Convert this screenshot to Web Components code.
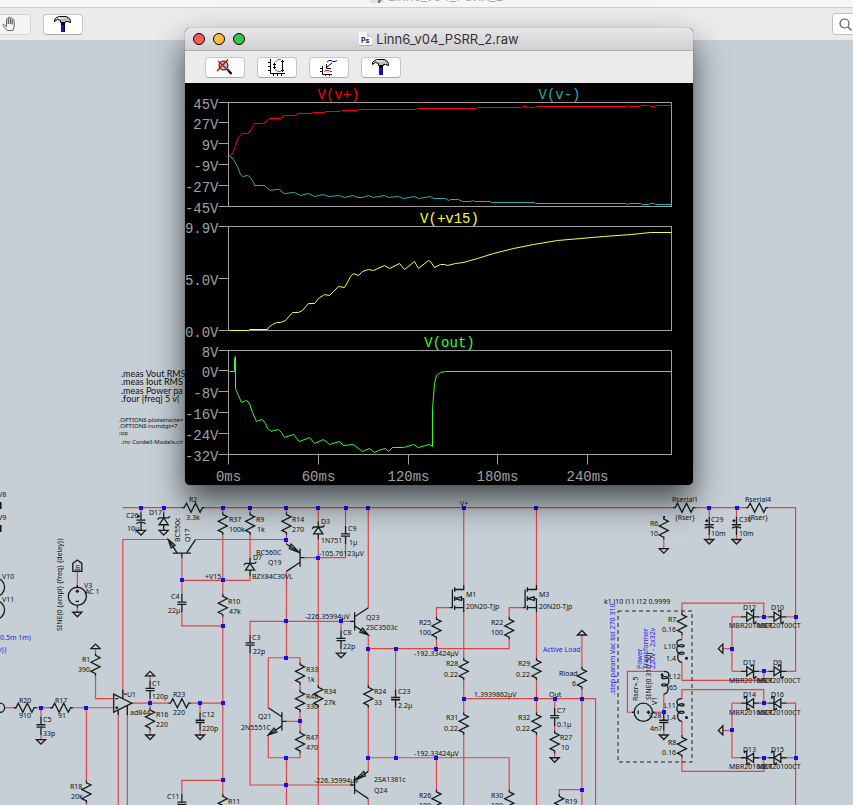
<!DOCTYPE html>
<html lang="en">
<head>
<meta charset="utf-8">
<title>Linn6_v04_PSRR_2</title>
<style>
  html, body { height: 100%; margin: 0; }
  body { font-family: Inter, "Liberation Sans", sans-serif; font-size: 13px; overflow: hidden; }
</style>
</head>
<body>
<sim-desktop></sim-desktop>

<script>
/* ICONS */
const HAMMER = `
  <path d="M0.5 5.5V3.5L2.5 1.5L5.5 0.5H12.5L15.5 2.5L16.5 4.5V6.5L13.5 5.5H11.5V6.5H6.5V4.5L3.5 3.5Z" fill="#b8bcbc" stroke="#000"/>
  <path d="M4 2H11" stroke="#fff"/>
  <path d="M7 7H11V10H7Z" fill="#000"/>
  <path d="M7 9H11V16H7Z" fill="#1010d8"/>
  <path d="M10.5 8V16" stroke="#000070"/>`;

const ICONS = {
  hammer: HAMMER,
  hand: `
    <path d="M5 14.5L1 9.5C0.5 8.3 1.8 7.8 2.6 8.7L4.5 10.8V3.5C4.5 2.2 6.2 2.2 6.3 3.5V8V2C6.4 0.7 8.2 0.7 8.3 2V8V2.5C8.4 1.3 10.2 1.3 10.2 2.6V8.3V4.5C10.4 3.2 12.2 3.4 12.2 4.7V11L10.8 14.5Z" fill="#f6f6f6" stroke="#666"/>`,
  zoomoff: `
    <circle cx="7.5" cy="6.5" r="4.5" fill="#70e4e8" stroke="#000"/>
    <path d="M11 10L15.5 15" stroke="#000" stroke-width="2.4"/>
    <path d="M2 2L13 12M12 0.5L1 12" stroke="#f00" stroke-width="1.6"/>`,
  autorange: `
    <path d="M2.5 0V14.5H17M0 3.5H2M0 7.5H2M0 11.5H2M5.5 15V17M9.5 15V17M13.5 15V17" fill="none" stroke="#000"/>
    <path d="M14.5 1V13M6.5 4V10" stroke="#000"/>
    <path d="M13 2.5H16M13 11.5H16M5 5.5H8M5 8.5H8" stroke="#000"/>
    <path d="M13 0.5H10L7 3.5M7 10.5L10 12.5H13" fill="none" stroke="#f03010"/>`,
  pick: `
    <path d="M2.5 7V15.5H12M0 9.5H2M0 12.5H2M5.5 15V17M9.5 15V17" fill="none" stroke="#000"/>
    <path d="M4 12.5L6 11.5H9L10 12.5H12" fill="none" stroke="#f00"/>
    <path d="M7 3L9 1.5H11L13 2.5H15L17 1.5" fill="none" stroke="#00f"/>
    <path d="M12 4L6.5 8.5M6.5 5V9.5H11" fill="none" stroke="#000"/>`
};

/* TOOLBAR BUTTON */
class ToolButton extends HTMLElement {
  constructor() {
    super();
    this.attachShadow({mode: 'open'});
  }
  connectedCallback() {
    const off = this.hasAttribute('disabled');
    this.shadowRoot.innerHTML = `
      <style>
        :host { display: block; flex: none; }
        button { display: flex; align-items: center; justify-content: center; width: 40px; height: 21px; padding: 0;
          background: #fff; border: 1px solid #c4c4c4; border-bottom-color: #a8a8a8; border-radius: 4px; }
        button:disabled { background: #f4f4f4; border-color: #d4d4d4; }
      </style>
      <button type="button" aria-label="${this.getAttribute('label')}" ${off ? 'disabled' : ''}>
        <svg width="18" height="17" viewBox="0 0 18 17">${ICONS[this.getAttribute('icon')]}</svg>
      </button>`;
  }
}
window.customElements.define('tool-button', ToolButton);

/* SEARCH FIELD */
class SearchField extends HTMLElement {
  constructor() {
    super();
    this.attachShadow({mode: 'open'}).innerHTML = `
      <style>
        :host { display: block; flex: none; }
        label { display: flex; align-items: center; gap: 6px; width: 130px; height: 22px; box-sizing: border-box;
          padding-left: 6px; background: #fff; border: 1px solid #c0c0c0; border-radius: 4px; }
        input { flex: 1; min-width: 0; border: 0; outline: 0; background: none; font: inherit; }
      </style>
      <label>
        <svg width="13" height="13" viewBox="0 0 13 13" fill="none" stroke="#555" stroke-width="1.2">
          <circle cx="5.5" cy="5.5" r="4.5"/><path d="M9 9L12.5 12.5"/>
        </svg>
        <input type="search" aria-label="Search">
      </label>`;
  }
}
window.customElements.define('search-field', SearchField);

/* WINDOW: title bar, toolbar and content */
class MacWindow extends HTMLElement {
  constructor() {
    super();
    this.attachShadow({mode: 'open'}).innerHTML = `
      <style>
        :host { display: flex; flex-direction: column; overflow: hidden; }
        header { display: flex; flex: none; align-items: center; height: 22px; position: relative;
          background: linear-gradient(#e9e7e9, #d1cfd1); border-bottom: 1px solid #b1afb1; color: #333; }
        .lights { display: flex; gap: 8px; padding-left: 8px; position: absolute; left: 0; }
        .lights button { width: 12px; height: 12px; padding: 0; border: 1px solid; border-radius: 50%; }
        .close { background: #fc5b57; border-color: #e2453f; }
        .mini { background: #fdbc40; border-color: #e0a030; }
        .full { background: #34c84a; border-color: #27aa35; }
        h1 { display: flex; align-items: center; gap: 4px; margin: 0 auto; font-size: 13px; line-height: 20px; font-weight: 400; }
        nav { display: flex; flex: none; align-items: center; gap: 12px; height: 32px; background: #ebebeb; }
        :host([inactive]) header { background: #f6f6f6; border-color: #cfcfcf; color: #aaa; }
        :host([inactive]) .lights { display: none; }
        main { flex: 1; min-height: 0; display: flex; flex-direction: column; }
      </style>
      <header>
        <div class="lights">
          <button class="close" aria-label="Close"></button>
          <button class="mini" aria-label="Minimize"></button>
          <button class="full" aria-label="Zoom"></button>
        </div>
        <h1><slot name="icon"></slot><slot name="title"></slot></h1>
      </header>
      <nav part="tools"><slot name="tool"></slot></nav>
      <main><slot></slot></main>`;
  }
}
window.customElements.define('mac-window', MacWindow);

/* WAVEFORM PANES */
const PANES = [
  {
    labels: ['45V', '27V', '9V', '-9V', '-27V', '-45V'],
    traces: [
      {name: 'V(v+)', x: 153, color: '#ff0000', points: '44,72 47,70 50,62 53,54 56,50 62,50 65,47 69,40 78,40 81,37 84,35 95,35 98,32 110,32 112,30 126,30 127,29 139,29 140,28 155,28 156,27 172,27 173,26 231,26 232,25 291,25 292,24 336,24 337,23 342,23 344,24 349,24 351,23 440,23 442,22 444,23 454,23 456,22 463,22 465,23 469,23 471,22 486,22'},
      {name: 'V(v-)', x: 374, color: '#20b0b0', points: '44,72 48,76 52,83 55,91 57,93 62,92 64,93 67,97 69,102 79,102 82,105 85,107 91,106 94,106 98,110 109,109 115,112 123,110 129,113 138,111 143,113 154,112 159,114 168,112 172,114 177,114 183,112 188,114 199,112 203,114 213,113 218,115 229,113 233,115 245,113 248,115 260,115 263,117 265,116 273,116 277,118 285,118 287,117 289,118 305,118 306,119 349,119 350,120 440,120 442,121 444,120 455,120 456,121 463,121 465,120 469,120 470,121 486,121'}
    ]
  },
  {
    labels: ['9.9V', '5.0V', '0.0V'],
    traces: [
      {name: 'V(+v15)', x: 264, color: '#ffff30', points: '44,123 63,123 64,122 82,122 83,120 87,117 91,115 95,115 100,113 107,105 113,105 117,103 123,96 129,96 133,91 139,87 144,88 148,84 153,79 159,80 163,73 165,69 168,66 173,68 177,64 183,62 188,63 199,58 204,61 214,56 219,62 229,54 233,61 243,53 245,54 249,60 255,57 259,57 262,58 270,56 278,55 292,51 308,46 328,41 348,37 372,33 395,31 418,29 446,27 465,25 486,25'}
    ]
  },
  {
    labels: ['8V', '0V', '-8V', '-16V', '-24V', '-32V'],
    time: ['0ms', '60ms', '120ms', '180ms', '240ms'],
    traces: [
      {name: 'V(out)', x: 264, color: '#30ff30', points: '44,40 49,40 49,27 50,25 50,57 53,64 56,71 61,69 64,72 67,81 71,90 73,89 77,88 80,92 82,97 86,100 88,99 93,98 96,101 99,106 108,103 114,110 124,106 129,112 138,108 144,113 154,110 158,114 168,113 177,120 184,117 189,121 193,119 200,117 203,120 207,116 218,116 228,113 233,116 244,113 247,115 247,78 249,52 251,44 255,41 260,40 486,40'}
    ]
  }
];

class WavePane extends HTMLElement {
  constructor() {
    super();
    this.attachShadow({mode: 'open'});
  }
  connectedCallback() {
    const pane = PANES[this.getAttribute('index')];
    const height = pane.time ? 154 : 124;
    const step = 104 / (pane.labels.length - 1);
    let axis = '';
    pane.labels.forEach((label, i) => {
      const y = Math.floor(19 + i * step);
      axis += `<path d="M33 ${y}H43"/><text x="33" y="${y + 6}" text-anchor="end">${label}</text>`;
    });
    (pane.time || []).forEach((label, i) => {
      const x = Math.round(43 + i * 89.75);
      axis += `<path d="M${x} 123V133"/><text x="${x}" y="149" text-anchor="middle">${label}</text>`;
    });
    const traces = pane.traces.map(t => `
      <text x="${t.x}" y="15" text-anchor="middle" style="fill: ${t.color}">${t.name}</text>
      <polyline points="${t.points}" fill="none" stroke="${t.color}"/>`).join('');

    this.shadowRoot.innerHTML = `
      <style>
        :host { display: block; }
        svg { display: block; width: 100%; overflow: visible; }
        text { font: 14px "Liberation Mono", monospace; fill: #a0a0a0; stroke: none; }
      </style>
      <svg viewBox="0 0 508 ${height}">
        <g transform="translate(0.5 0.5)" stroke="#a0a0a0" fill="none">
          <rect x="43" y="19" width="443" height="104"/>
          ${axis}${traces}
        </g>
      </svg>`;
  }
}
window.customElements.define('wave-pane', WavePane);

/* SCHEMATIC
   Parts and wires sit on a 16 unit grid, one grid step is G pixels on screen. */
const G = 4.546;
const X0 = 4.6;
const Y0 = 13.1;

const SYMBOLS = {
  res: 'M0 0V8L16 16L-16 32L16 48L-16 64L0 72V80',
  cap: 'M0 0V28M-16 28H16M-16 36H16M0 36V64',
  polcap: 'M0 0V28M-16 28H16M-16 40Q0 30 16 40M0 35V64M-14 14H-4M-9 9V19',
  zener: 'M0 0V20M-22 26L-16 20H16L22 14M0 20L-16 44H16ZM0 44V64',
  schottky: 'M0 0V20M-16 28H-22V20H22V12H16M0 20L-16 44H16ZM0 44V64',
  npn: 'M0 0H16M16 -32V32M16 -16L64 -48M16 16L64 48M44 24L64 48L34 38Z',
  pnp: 'M0 0H16M16 -32V32M16 -16L64 -48M16 16L64 48M48 -48L18 -18L54 -32Z',
  nmos: 'M0 0V16H-32M-32 8V24M0 48H-8M-32 48L-8 42V54ZM-32 40V56M-32 72V88M-32 80H0M0 48V96M-48 80H-40V16',
  ind: 'M0 0C24 0 24 24 0 26C-10 26 -10 18 0 18C24 18 24 50 0 52C-10 52 -10 44 0 44C20 44 20 78 0 80',
  gnd: 'M-16 0H16L0 16Z',
  src: 'M0 0V8M0 72V80M32 40A32 32 0 1 1 -32 40A32 32 0 1 1 32 40M-6 22H6M0 16V28M-6 58H6'
};

// symbol, column, row, rotation, mirrored
const PARTS = [
  ['res', 44, 100, 90], ['res', 48, 101], ['res', 54, 101], ['res', 62, 101], ['res', 48, 119],
  ['polcap', 30, 101], ['gnd', 30, 105], ['zener', 35, 101], ['gnd', 35, 105],
  ['zener', 69, 103], ['zener', 54, 111], ['cap', 75, 104], ['cap', 39, 119],
  ['npn', 39, 111, 90, 1], ['pnp', 66, 111, 0, 1], ['npn', 76, 125], ['pnp', 76, 161], ['npn', 62, 147, 0, 1],
  ['cap', 54, 128], ['cap', 74, 127], ['gnd', 74, 132],
  ['res', 65, 134], ['res', 65, 140], ['res', 65, 149], ['res', 69, 139], ['res', 80, 139], ['cap', 86, 140],
  ['nmos', 101, 117], ['nmos', 117, 117], ['res', 95, 124], ['res', 111, 124],
  ['res', 101, 133], ['res', 117, 133], ['res', 101, 145], ['res', 117, 145], ['res', 95, 162], ['res', 111, 162],
  ['gnd', 127, 128, 180], ['res', 127, 135], ['cap', 121, 144], ['res', 121, 149], ['gnd', 121, 155], ['res', 122, 163],
  ['src', 16, 117], ['gnd', 16, 123], ['src', -2, 115], ['src', -2, 120],
  ['res', 7, 144, 90], ['res', 15, 144, 90], ['cap', 8, 146], ['gnd', 8, 151], ['gnd', 20, 131, 180], ['res', 20, 132],
  ['res', 18, 160], ['gnd', 32, 137, 180], ['cap', 32, 138], ['res', 32, 144], ['gnd', 32, 150],
  ['res', 41, 143, 90], ['cap', 43, 145], ['gnd', 43, 150], ['cap', 39, 163], ['res', 48, 163],
  ['res', 152, 100, 90], ['res', 168, 100, 90], ['res', 145, 102], ['gnd', 145, 109],
  ['polcap', 155, 102], ['gnd', 155, 107], ['polcap', 161, 102], ['gnd', 161, 107],
  ['res', 149, 123], ['ind', 149, 129, 0, 1], ['ind', 149, 142, 0, 1], ['res', 149, 150], ['ind', 145, 136],
  ['src', 143, 145, 90], ['cap', 145, 145], ['gnd', 145, 150],
  ['schottky', 166, 124, 90], ['schottky', 172, 124, 90], ['schottky', 166, 136, 90], ['schottky', 172, 136, 90],
  ['schottky', 162, 143, -90], ['schottky', 168, 143, -90], ['schottky', 162, 155, -90], ['schottky', 168, 155, -90],
  ['gnd', 158, 131, 90], ['gnd', 158, 149, 90]
];

// each wire is a list of column,row corners
const WIRES = `
26,100 39,100|44,100 147,100|152,100 163,100|168,100 174,100 174,136 172,136|30,100 30,101|35,100 35,101
48,100 48,101|54,100 54,101|62,100 62,101|69,100 69,103|75,100 75,104|80,100 80,122|101,100 101,117|117,100 117,117
26,141 26,107 36,107|42,107 62,107|62,106 62,108|69,107 69,139|75,108 75,111 66,111|48,106 48,119|54,106 54,111
39,111 39,119|39,116 54,116 54,115|39,123 39,126 48,126|48,124 48,163|62,114 62,133|54,128 54,125 76,125
74,125 74,127|74,131 74,132|54,132 54,161 76,161|80,128 80,139|80,144 80,158|80,164 80,170|80,131 111,131 111,129
86,131 86,140|86,144 86,155|80,155 111,155 111,162|95,155 95,162|95,129 95,131|95,124 95,122 98,122|111,124 111,122 114,122
58,144 58,133 65,133 65,134|65,139 65,140|65,145 65,149|65,154 65,155 58,155 58,150|62,147 65,147|62,155 62,170|69,144 69,170
101,123 101,133|101,138 101,145|101,150 101,170|117,123 117,133|117,138 117,145|117,150 117,170
101,142 130,142 130,170|121,142 121,144|121,148 121,149|121,154 121,155|127,128 127,135|127,140 127,170|127,162 122,162 122,163
16,114 16,117|16,122 16,123|0,144 2,144|7,144 10,144|15,144 24,144|8,144 8,146|8,150 8,151|18,144 18,160|18,165 18,170
20,131 20,132|20,137 20,142 24,142|25,145 25,170|27,145 27,170|28,143 36,143|41,143 48,143|32,137 32,138|32,142 32,144
32,149 32,150|43,143 43,145|43,149 43,150|39,163 39,160 48,160|145,107 145,109|155,100 155,102|155,106 155,107
161,100 161,102|161,106 161,107|149,123 149,121 167,121 167,124|149,128 149,129|149,134 149,138 167,138 167,136
149,142 149,140 167,140 167,143|149,147 149,150|149,155 149,158 167,158 167,155|145,136 137,136 137,145 138,145
143,145 145,145|145,141 145,145|145,149 145,150|160,124 160,136|160,143 160,155|158,131 160,131|158,149 160,149
160,124 162,124|166,124 168,124|172,124 174,124|160,136 162,136|166,136 168,136|160,143 162,143|166,143 168,143
172,143 174,143 174,170|160,155 162,155|166,155 168,155|172,155 174,155`;

const NODES = `30,100 35,100 48,100 54,100 62,100 69,100 75,100 80,100 101,100 117,100 155,100 161,100 62,107 69,111
39,116 48,116 48,126 62,125 74,125 80,131 86,131 95,131 62,133 65,147 62,155 62,161 80,155 86,155 95,155
101,142 117,142 121,142 127,142 127,162 8,144 18,144 32,143 43,143 48,143 48,160 174,124 174,155 167,124 167,136
167,143 167,155 160,131 160,149 145,145`;

// x, y, text, class names
const LABELS = [
  [121, 377, '.meas Vout RMS', 'big'], [121, 385, '.meas Iout RMS', 'big'],
  [121, 394, '.meas Power pa', 'big'], [121, 402, '.four {freq} 5 v(', 'big'],
  [119, 422, '.OPTIONS plotwinsize=', 'small'], [119, 428, '.OPTIONS numdgt=7', 'small'],
  [119, 435, ';op', 'small'], [121, 444, '.inc Cordell-Models.cir', 'small'],
  [-2, 497, 'V8'], [-2, 520, 'V9'], [2, 579, 'V10'], [2, 602, 'V11'],
  [0, 640, '0.5m 1m)', 'blue'], [-2, 652, 'v})', 'blue'],
  [62, 631, 'SINE(0 {ampl} {freq} {delay})', 'up'], [80, 571, 'In', 'up'], [84, 588, 'V3'], [85, 594, 'AC 1'],
  [126, 518, 'C26'], [127, 531, '10µ'], [149, 515, 'D17'], [189, 502, 'R2'], [186, 520, '3.3k'],
  [180, 542, 'BC550c', 'up'], [190, 542, 'Q17', 'up'],
  [229, 522, 'R37'], [229, 532, '100k'], [256, 522, 'R9'], [257, 532, '1k'], [292, 522, 'R14'], [292, 532, '270'],
  [321, 524, 'D3'], [321, 543, '1N751'], [348, 531, 'C9'], [349, 545, '1µ'], [319, 556, '-105.76123µV'],
  [256, 555, 'BC560C'], [268, 565, 'Q19'], [253, 560, 'D7'], [252, 579, 'BZX84C30VL'], [205, 579, '+V15'],
  [171, 599, 'C4'], [168, 613, '22µ'], [228, 604, 'R10'], [229, 614, '47k'], [305, 619, '-226.35994µV'],
  [252, 640, 'C3'], [253, 654, '22p'], [343, 635, 'C8'], [343, 649, '22p'], [366, 620, 'Q23'], [366, 630, '2SC3503c'],
  [306, 672, 'R33'], [307, 682, '1k'], [306, 699, 'R48'], [306, 709, '330'], [306, 740, 'R47'], [306, 750, '470'],
  [324, 694, 'R34'], [324, 705, '27k'], [258, 719, 'Q21'], [241, 730, '2N5551C'], [374, 694, 'R24'], [374, 705, '33'],
  [398, 694, 'C23'], [398, 708, '2.2µ'], [314, 783, '-226.35994µV'], [374, 782, '2SA1381c'], [374, 793, 'Q24'],
  [228, 804, 'R11'], [167, 799, 'C11'], [414, 656, '-192.33424µV'], [414, 756, '-192.33424µV'],
  [419, 625, 'R25'], [419, 635, '100'], [491, 625, 'R22'], [491, 635, '100'],
  [466, 597, 'M1'], [466, 609, '20N20-Tjp'], [539, 597, 'M3'], [539, 609, '20N20-Tjp'],
  [446, 666, 'R28'], [444, 677, '0.22'], [518, 666, 'R29'], [516, 677, '0.22'],
  [446, 720, 'R31'], [444, 731, '0.22'], [518, 720, 'R32'], [516, 731, '0.22'],
  [559, 676, 'Rload'], [572, 686, '6'], [543, 652, 'Active Load', 'blue'], [474, 697, '1.3939862µV'], [549, 697, 'Out'],
  [460, 506, 'V+'], [557, 713, 'C7'], [557, 727, '0.1µ'], [560, 740, 'R27'], [561, 750, '10'],
  [419, 798, 'R26'], [419, 808, '100'], [491, 798, 'R30'], [491, 808, '100'], [565, 804, 'R19'],
  [82, 662, 'R1'], [78, 672, '390'], [19, 703, 'R20'], [19, 718, '910'], [55, 703, 'R17'], [58, 718, '91'],
  [43, 722, 'C5'], [43, 736, '33p'], [70, 789, 'R18'], [71, 799, '20k'], [127, 697, 'U1'], [130, 715, 'ad844'],
  [152, 686, 'C1'], [152, 699, '120p'], [156, 717, 'R16'], [156, 727, '220'], [173, 697, 'R23'], [173, 715, '220'],
  [202, 717, 'C12'], [202, 731, '220p'],
  [672, 502, 'Rserial1'], [675, 520, '{Rser}'], [745, 502, 'Rserial4'], [748, 520, '{Rser}'],
  [650, 526, 'R6'], [650, 536, '10'], [711, 522, 'C29'], [711, 536, '10m'], [739, 522, 'C30'], [739, 536, '10m'],
  [604, 604, 'k1 l10 l11 l12 0.9999'], [615, 695, '.step param Vac list 270 310', 'up blue'],
  [642, 669, 'Power', 'up blue'], [648, 669, 'Transformer', 'up blue'], [655, 669, '220V - 2x32v', 'up blue'],
  [638, 701, 'Rser=.5', 'up'], [651, 700, 'SINE(0 310 50)', 'up'], [657, 705, 'V1', 'up'],
  [668, 622, 'R7'], [662, 632, '0.16'], [664, 649, 'L10'], [666, 661, '1.4'], [669, 679, 'L12'], [669, 690, '65'],
  [664, 708, 'L11'], [666, 720, '1.4'], [668, 745, 'R8'], [662, 755, '0.16'], [649, 718, 'C28'], [650, 731, '4n7'],
  [743, 610, 'D12'], [771, 610, 'D10'], [729, 628, 'MBR20100CT'], [757, 628, 'MBR20100CT'],
  [743, 665, 'D11'], [773, 665, 'D9'], [729, 683, 'MBR20100CT'], [757, 683, 'MBR20100CT'],
  [743, 697, 'D14'], [771, 697, 'D16'], [729, 715, 'MBR20100CT'], [757, 715, 'MBR20100CT'],
  [743, 752, 'D13'], [771, 752, 'D15'], [729, 769, 'MBR20100CT'], [757, 769, 'MBR20100CT']
];

class CircuitSchematic extends HTMLElement {
  constructor() {
    super();
    this.attachShadow({mode: 'open'});
  }
  connectedCallback() {
    const parts = PARTS.map(([name, col, row, turn = 0, flip]) =>
      `<path d="${SYMBOLS[name]}" transform="translate(${col * 16} ${row * 16}) rotate(${turn}) scale(${flip ? -1 : 1} 1)"/>`
    ).join('');
    const wires = WIRES.trim().split(/[|\n]/).map(w => `<polyline points="${w}"/>`).join('');
    const nodes = NODES.split(/\s+/).map(n => {
      const [col, row] = n.split(',');
      return `<rect x="${Math.round(X0 + col * G) - 2}" y="${Math.round(Y0 + row * G) - 2}" width="4" height="4"/>`;
    }).join('');
    const labels = LABELS.map(([x, y, text, kind = '']) =>
      `<text class="${kind}" transform="translate(${x} ${y - 40})${kind.includes('up') ? ' rotate(-90)' : ''}">${text}</text>`
    ).join('');

    this.shadowRoot.innerHTML = `
      <style>
        :host { display: block; flex: 1; min-height: 0; background: #c5cfd5; }
        svg { display: block; width: 100%; height: 100%; }
        path, polyline { fill: none; }
        text { font: 7px "Noto Sans", "Liberation Sans", sans-serif; fill: #111; }
        .big { font: 9px Lato, "Liberation Sans", sans-serif; }
        .small { font-size: 6px; }
        .blue { fill: #2a20f0; }
      </style>
      <svg>
        <g transform="translate(${X0} ${Y0}) scale(${G})" stroke="#e04444" stroke-width="0.26">${wires}</g>
        <g transform="translate(${X0} ${Y0}) scale(${G / 16})" stroke="#181c1c" stroke-width="4.6">
          ${parts}
          <path d="M384 2256V2320L448 2288ZM390 2272H400M390 2304H400M395 2299V2309M416 2240V2272M400 2312V2330M432 2296V2330M420 2256H430"/>
          <path d="M240 1824V1796L256 1784L272 1796V1824Z"/>
          <circle cx="-16" cy="2304" r="16" fill="none"/>
          <circle cx="2400" cy="2130" r="3"/><circle cx="2400" cy="2338" r="3"/><circle cx="2314" cy="2188" r="3"/>
        </g>
        <path d="M0 462V469M0 485V492" stroke="#111" stroke-width="3"/>
        <rect x="618" y="571" width="74" height="151" fill="none" stroke="#222" stroke-dasharray="4 3"/>
        <g fill="#1010f0">${nodes}<rect x="663" y="476" width="2" height="2"/></g>
        ${labels}
      </svg>`;
  }
}
window.customElements.define('circuit-schematic', CircuitSchematic);

/* DESKTOP */
class SimDesktop extends HTMLElement {
  constructor() {
    super();
    this.attachShadow({mode: 'open'}).innerHTML = `
      <style>
        :host { display: flow-root; height: 100%; overflow: hidden; position: relative; }
        .schematic { height: calc(100% + 15px); margin: -15px -20px 0 0; }
        .schematic::part(tools) { margin-left: -9px; margin-right: -89px; }
        .waves { position: absolute; left: 185px; top: 28px; width: 508px; border-radius: 5px; background: #000;
          box-shadow: 0 0 1px rgba(0, 0, 0, .5), 0 16px 32px rgba(0, 0, 0, .65); }
        .waves::part(tools) { padding-left: 20px; }
        search-field { margin-left: auto; }
      </style>
      <mac-window class="schematic" inactive>
        <svg slot="icon" width="14" height="14" viewBox="0 0 14 14"><path d="M0 0H14V14H0Z" fill="#e2e2e2"/><path d="M4 7L11 12M9 8V14" stroke="#777" stroke-width="2"/></svg>
        <span slot="title">Linn6_v04_PSRR_2</span>
        <tool-button slot="tool" icon="hand" label="Halt" disabled></tool-button>
        <tool-button slot="tool" icon="hammer" label="Control panel"></tool-button>
        <search-field slot="tool"></search-field>
        <circuit-schematic></circuit-schematic>
      </mac-window>
      <mac-window class="waves">
        <svg slot="icon" width="13" height="14" viewBox="0 0 13 14"><path d="M0 0H8L13 5V14H0Z" fill="#fafafa"/><path d="M8 0V5H13" fill="#ccc"/><path d="M0 13.5H13" stroke="#aaa"/><text x="2" y="11" font-size="7" font-weight="700" fill="#224">Ps</text></svg>
        <span slot="title">Linn6_v04_PSRR_2.raw</span>
        <tool-button slot="tool" icon="zoomoff" label="Zoom to fit"></tool-button>
        <tool-button slot="tool" icon="autorange" label="Autorange"></tool-button>
        <tool-button slot="tool" icon="pick" label="Pick visible traces"></tool-button>
        <tool-button slot="tool" icon="hammer" label="Control panel"></tool-button>
        <wave-pane index="0"></wave-pane>
        <wave-pane index="1"></wave-pane>
        <wave-pane index="2"></wave-pane>
      </mac-window>`;
  }
}
window.customElements.define('sim-desktop', SimDesktop);
</script>
</body>
</html>
